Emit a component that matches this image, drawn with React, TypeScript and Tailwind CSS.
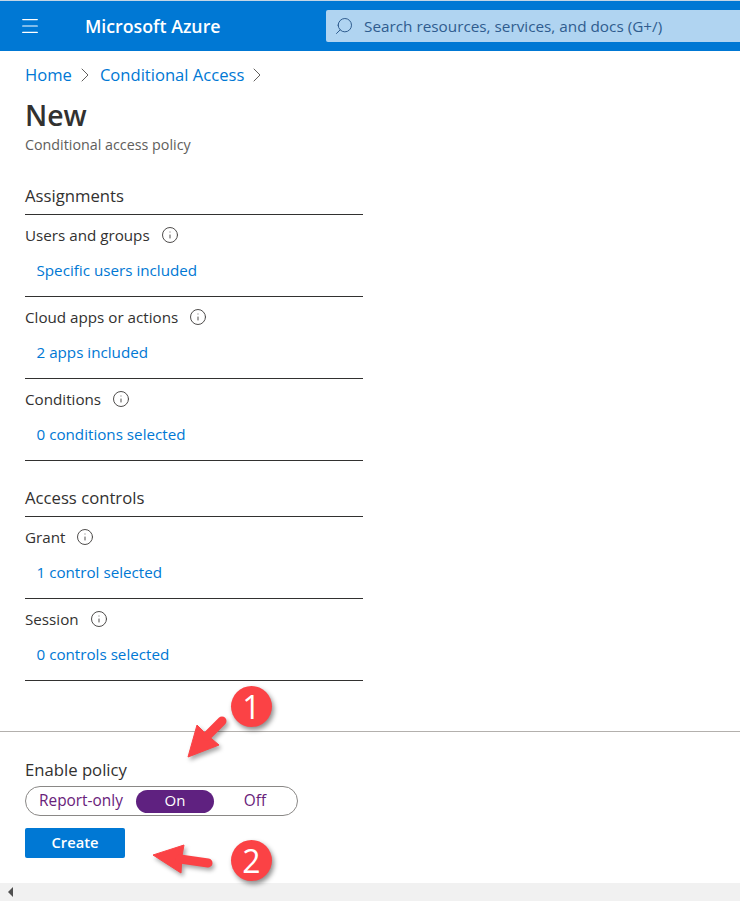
import { ChevronRight, Info, Menu, Search } from "lucide-react";

const font = "font-['Open_Sans','Noto_Sans',sans-serif]";

function Row({ label, value }: { label: string; value: string }) {
    return (
        <div className="h-[82px] border-b border-[#323130]">
            <div className="flex items-center gap-[11px] pt-[5px] h-[34px] text-[15.2px] leading-[20px] text-[#323130]">
                <span>{label}</span>
                <Info size={18} strokeWidth={1.3} className="text-[#4a4847]" />
            </div>
            <div className="pl-[11.5px] pt-[11px] text-[15.2px] leading-[20px] text-[#0078d4]">{value}</div>
        </div>
    );
}

function Badge({ n, className }: { n: string; className: string }) {
    return (
        <div className={`absolute flex h-[41px] w-[41px] items-center justify-center rounded-full bg-[#fb4245] text-[32px] leading-none text-white shadow-[2px_3px_5px_rgba(0,0,0,0.45)] ${className}`}>
            {n}
        </div>
    );
}

export default function App() {
    return (
        <div className={`relative h-[901px] w-[740px] overflow-hidden bg-white ${font}`}>
            <div className="h-px bg-[#c4d6e6]" />
            <header className="flex h-[50px] items-center bg-[#0078d4] text-white">
                <Menu size={22} strokeWidth={1.25} className="ml-[19px]" />
                <div className="ml-[44px] w-[241px] text-[17.75px] font-semibold">Microsoft Azure</div>
                <div className="flex h-[32px] flex-1 items-center rounded-l-[2px] bg-[#b0d4f1] pl-[8px] text-[15.3px] text-[#2f5c8f]">
                    <Search size={20} strokeWidth={1.2} className="-scale-x-100" />
                    <span className="ml-[10px]">Search resources, services, and docs (G+/)</span>
                </div>
            </header>

            <main className="px-[25px]">
                <nav className="flex h-[48px] items-center text-[16.6px] text-[#0078d4]">
                    <span>Home</span>
                    <ChevronRight size={24} strokeWidth={1} className="ml-px mr-[3px] text-[#605e5c]" />
                    <span>Conditional Access</span>
                    <ChevronRight size={24} strokeWidth={1} className="ml-px text-[#605e5c]" />
                </nav>
                <h1 className="-mt-px text-[28.4px] font-semibold leading-[34px] text-[#323130]">New</h1>
                <p className="mt-[3px] text-[14.3px] leading-[20px] text-[#605e5c]">Conditional access policy</p>

                <div className="mt-[30px] w-[338px]">
                    <h2 className="h-[30px] border-b border-[#323130] text-[16.7px] leading-[22px] text-[#323130]">Assignments</h2>
                    <Row label="Users and groups" value="Specific users included" />
                    <Row label="Cloud apps or actions" value="2 apps included" />
                    <Row label="Conditions" value="0 conditions selected" />
                    <h2 className="mt-[26px] h-[30px] border-b border-[#323130] text-[16.7px] leading-[22px] text-[#323130]">Access controls</h2>
                    <Row label="Grant" value="1 control selected" />
                    <Row label="Session" value="0 controls selected" />
                </div>
            </main>

            <div className="mt-[50px] border-t border-[#b3b0ad]" />

            <section className="px-[25px] pt-[27px]">
                <div className="text-[16.7px] leading-[22px] text-[#323130]">Enable policy</div>
                <div className="mt-[5px] flex h-[30px] w-[273px] items-center rounded-full border border-[#8a8886] pl-[13px] text-[15.4px] text-[#68217a]">
                    <span className="w-[97px]">Report-only</span>
                    <span className="flex h-[23px] w-[78px] items-center justify-center rounded-full bg-[#5f2180] pb-[2px] text-[15px] text-white">On</span>
                    <span className="w-[82px] text-center">Off</span>
                </div>
                <button className="mt-[12px] h-[30px] w-[100px] rounded-[2px] bg-[#0078d4] pb-[2px] text-[14.7px] font-semibold text-white">Create</button>
            </section>

            <div className="absolute bottom-0 left-0 right-0 flex h-[18px] items-center bg-[#f1f1f1] pl-[8px]">
                <div className="h-0 w-0 border-y-[5px] border-r-[5px] border-y-transparent border-r-[#505050]" />
            </div>

            {/* annotations on top of the screenshot */}
            <svg className="absolute left-0 top-0 drop-shadow-[2px_3px_2px_rgba(0,0,0,0.35)]" width="740" height="901">
                <path d="M188 757 L197 725 L206 734 L219 745 Z" fill="#fb4245" stroke="#fb4245" strokeLinejoin="round" />
                <path d="M207 736 L222 721" stroke="#fb4245" strokeWidth="9" strokeLinecap="round" />
                <path d="M153 855 L184 845 L182 856 L181 873 Z" fill="#fb4245" stroke="#fb4245" strokeLinejoin="round" />
                <path d="M180 859 L208 863" stroke="#fb4245" strokeWidth="9" strokeLinecap="round" />
            </svg>
            <Badge n="1" className="left-[231px] top-[686px]" />
            <Badge n="2" className="left-[231px] top-[840px]" />
        </div>
    );
}
